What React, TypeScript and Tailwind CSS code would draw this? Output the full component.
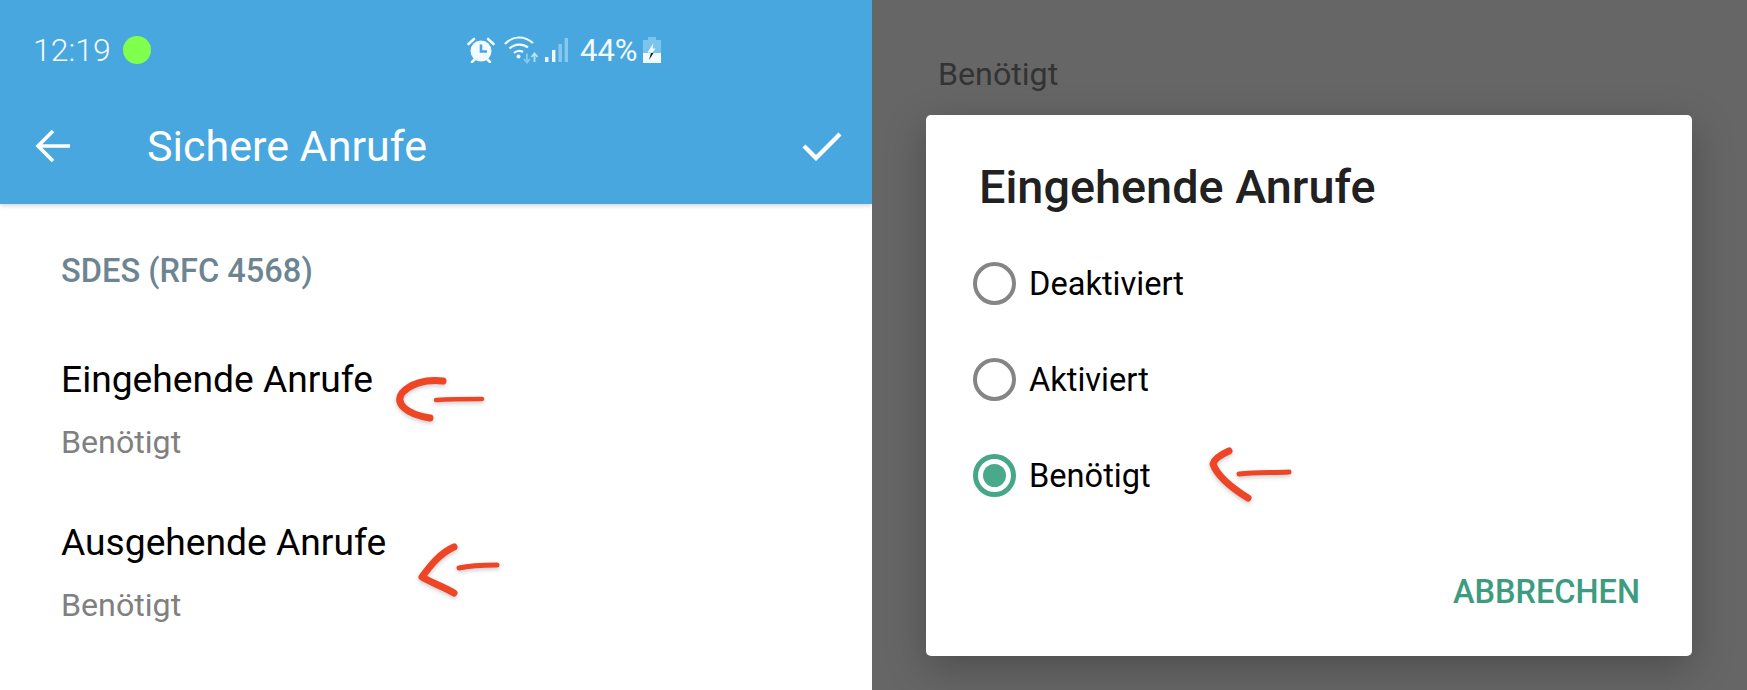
const font = { fontFamily: 'Roboto, sans-serif' };

function AlarmIcon() {
  return (
    <svg width="28" height="26" viewBox="0 0 28 26" className="shrink-0">
      <circle cx="14" cy="14" r="10.5" fill="#f2fbff" />
      <path d="M14 7.5V14.5H20" fill="none" stroke="#48a7de" strokeWidth="2.6" />
      <path d="M1.5 7L7 2M26.5 7L21 2M5 25l3-3M23 25l-3-3" stroke="#f2fbff" strokeWidth="2.6" strokeLinecap="round" />
    </svg>
  );
}

function WifiIcon() {
  return (
    <svg width="34" height="28" viewBox="0 0 34 28" className="shrink-0">
      <path d="M1 8C9 -0.5 20 -0.5 29 7" fill="none" stroke="#f2fbff" strokeWidth="2.2" />
      <path d="M5.5 12.5C11 7.5 19 7.5 24 11.5" fill="none" stroke="#f2fbff" strokeWidth="2.2" />
      <path d="M10 17C12.5 14.5 16.5 14.5 19 16" fill="none" stroke="#f2fbff" strokeWidth="2.2" />
      <circle cx="14.5" cy="20.5" r="2" fill="#f2fbff" />
      <path d="M23 17.5V26M20 23l3 3.5 3-3.5" fill="none" stroke="#86c9ee" strokeWidth="1.8" />
      <path d="M30.5 26V17.5M27.5 21l3-3.5 3 3.5" fill="none" stroke="#b9e2f6" strokeWidth="1.8" />
    </svg>
  );
}

function SignalIcon() {
  return (
    <svg width="23" height="24" viewBox="0 0 23 24" className="shrink-0">
      <rect x="0" y="19" width="3.4" height="5" fill="#f2fbff" />
      <rect x="7" y="12" width="3.4" height="12" fill="#f2fbff" />
      <rect x="13.5" y="6" width="3.4" height="18" fill="#86c9ee" />
      <rect x="19.6" y="0" width="3.4" height="24" fill="#86c9ee" />
    </svg>
  );
}

function BatteryIcon() {
  return (
    <svg width="18" height="26" viewBox="0 0 18 26" className="shrink-0">
      <path d="M5 0H13V3H18V16H0V3H5Z" fill="#7cc4ec" />
      <rect x="0" y="16" width="18" height="10" fill="#f2fbff" />
      <path d="M10.5 6L4.5 15.5H8.5L7.5 18L12.5 11.5H9.5Z" fill="#f2fbff" />
      <path d="M8 16L6 23L10.5 16Z" fill="#1a1a1a" />
    </svg>
  );
}

function Radio({ checked }: { checked?: boolean }) {
  return (
    <span
      className={
        checked
          ? 'flex h-[43px] w-[43px] shrink-0 items-center justify-center rounded-full border-[5px] border-[#46a688]'
          : 'flex h-[43px] w-[43px] shrink-0 items-center justify-center rounded-full border-[4px] border-[#858585]'
      }
    >
      {checked && <span className="h-[23px] w-[23px] rounded-full bg-[#4aa98b]" />}
    </span>
  );
}

function Option({ label, checked }: { label: string; checked?: boolean }) {
  return (
    <div className="flex h-[96px] items-center gap-[13px]">
      <Radio checked={checked} />
      <span className="pt-[2px] text-[32.6px] leading-none text-black">{label}</span>
    </div>
  );
}

function Setting({ title }: { title: string }) {
  return (
    <div className="h-[163px]">
      <div className="text-[37.2px] leading-[42px] text-black">{title}</div>
      <div className="mt-[24px] text-[32.2px] leading-[36px] text-[#808080]">Benötigt</div>
    </div>
  );
}

function Scribbles() {
  return (
    <svg width="1747" height="690" viewBox="0 0 1747 690" className="pointer-events-none absolute inset-0 drop-shadow-[0_2px_2px_rgba(0,0,0,0.2)]">
      <g fill="none" stroke="#ee4526" strokeLinecap="round" strokeLinejoin="round">
        <path d="M443 381C425 379 410 384 402 393C395 403 405 414 430 418" strokeWidth="7" />
        <path d="M436 400C452 399 468 399 482 399" strokeWidth="4.5" />
        <path d="M454 547C440 553 430 566 422 577C432 583 444 587 454 593" strokeWidth="7" />
        <path d="M459 568C472 565 485 565 497 565" strokeWidth="5" />
        <path d="M1229 451C1220 455 1214 459 1213 464C1218 478 1235 490 1248 498" strokeWidth="7" />
        <path d="M1239 474C1256 472 1274 473 1289 472" strokeWidth="5" />
      </g>
    </svg>
  );
}

export default function App() {
  return (
    <div className="relative flex h-[690px] w-full overflow-hidden bg-white" style={font}>
      <div className="w-[872px] shrink-0 bg-white">
        <header className="h-[204px] bg-[#48a7de] text-white shadow-[0_2px_4px_rgba(0,0,0,0.15)]">
          <div className="flex h-[100px] items-center pl-[33px]">
            <span className="w-[77px] text-[32px] leading-none font-light text-[#f2fbff]">12:19</span>
            <span className="ml-[13px] h-[28px] w-[28px] rounded-full bg-[#80ff4d]" />
            <div className="ml-[316px] flex items-center">
              <AlarmIcon />
              <span className="ml-[9px]"><WifiIcon /></span>
              <span className="ml-[7px]"><SignalIcon /></span>
              <span className="ml-[12px] text-[31px] leading-none text-[#f2fbff]">44%</span>
              <span className="ml-[5px]"><BatteryIcon /></span>
            </div>
          </div>
          <div className="flex h-[92px] items-center pr-[30px] pl-[35px]">
            <svg width="36" height="34" viewBox="0 0 36 34" fill="none" stroke="white" strokeWidth="3.6">
              <path d="M35 17H3M18 2L3 17L18 32" />
            </svg>
            <span className="ml-[76px] text-[43px] leading-none font-normal">Sichere Anrufe</span>
            <svg className="ml-auto" width="40" height="30" viewBox="0 0 40 30" fill="none" stroke="white" strokeWidth="4.4">
              <path d="M2 15L14 27L38 3" />
            </svg>
          </div>
        </header>
        <main className="px-[61px] pt-[49px]">
          <h2 className="text-[32.6px] leading-[36px] font-medium text-[#6d8592]">SDES (RFC 4568)</h2>
          <div className="mt-[69px]">
            <Setting title="Eingehende Anrufe" />
            <Setting title="Ausgehende Anrufe" />
          </div>
        </main>
      </div>

      <div className="flex-1 bg-[#666666] pt-[56px]">
        <div className="pl-[66px] text-[32.2px] leading-[36px] text-[#333333]">Benötigt</div>
        <section className="mt-[23px] ml-[54px] h-[541px] w-[766px] rounded-[5px] bg-white shadow-[0_12px_40px_rgba(0,0,0,0.25)]">
          <h1 className="pt-[45px] pl-[53px] text-[46.8px] leading-[54px] font-medium text-[#212121]">Eingehende Anrufe</h1>
          <div className="mt-[21px] pl-[47px]">
            <Option label="Deaktiviert" />
            <Option label="Aktiviert" />
            <Option label="Benötigt" checked />
          </div>
          <div className="mt-[53px] flex justify-end pr-[52px]">
            <button className="text-[32.5px] leading-none font-medium text-[#3d9c80]">ABBRECHEN</button>
          </div>
        </section>
      </div>
      <Scribbles />
    </div>
  );
}
